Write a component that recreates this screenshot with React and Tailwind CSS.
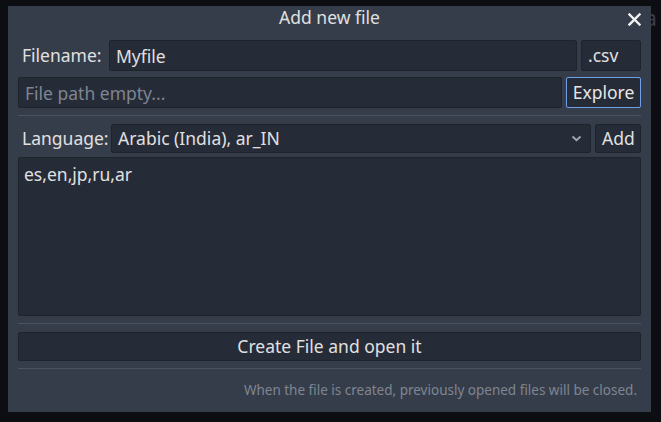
import { useState } from 'react'

const field =
  'h-full rounded-[2px] border border-[#1f232b] bg-[#262b38] px-[6px] text-[#e0e0e0] outline-none'

function Separator({ className = '' }) {
  return <div className={`h-px bg-[#4b5261] ${className}`} />
}

function App() {
  const [name, setName] = useState('Myfile')

  return (
    <div
      className="relative h-[422px] w-[661px] overflow-hidden bg-[#0c0e12] pt-[6px] pl-[8px] text-[17.5px] text-[#e0e0e0]"
      style={{ fontFamily: '"Noto Sans", sans-serif' }}
    >
      <span className="absolute top-[8px] left-[645px] text-[21px] leading-none text-[#3a3f49]">a</span>

      <div className="relative z-10 flex h-[406px] w-[643px] flex-col bg-[#363d4a] px-[10px]">
        {/* title bar */}
        <div className="relative flex h-[34px] items-center justify-center leading-none">
          <span className="-mt-[11px]">Add new file</span>
          <button type="button" className="absolute top-[6px] right-[0px] flex h-[14px] w-[14px] items-center justify-center">
            <svg width="13" height="13" viewBox="0 0 13 13">
              <path d="M1.5 1.5 L11.5 11.5 M11.5 1.5 L1.5 11.5" stroke="#f2f2f2" strokeWidth="2.4" strokeLinecap="square" />
            </svg>
          </button>
        </div>

        {/* filename */}
        <div className="flex h-[31px] items-center gap-[4px]">
          <span className="w-[87px] pl-[4px]">Filename:</span>
          <input
            value={name}
            onChange={(event) => setName(event.target.value)}
            className={`${field} min-w-0 flex-1`}
          />
          <div className={`${field} flex w-[60px] items-center text-[#c8cbd0]`}>.csv</div>
        </div>

        {/* path */}
        <div className="mt-[6px] flex h-[31px] items-center gap-[4px]">
          <input
            placeholder="File path empty..."
            className={`${field} min-w-0 flex-1 placeholder:text-[#7e8591]`}
          />
          <button
            type="button"
            className="h-full w-[75px] rounded-[2px] border border-[#6f9fe6] bg-[#262b38] text-center text-[#e6e6e6]"
          >
            Explore
          </button>
        </div>

        <Separator className="mt-[7px]" />

        {/* language */}
        <div className="mt-[8px] flex h-[29px] items-center gap-[4px]">
          <span className="w-[89px] pl-[4px]">Language:</span>
          <div className={`${field} flex flex-1 items-center justify-between`}>
            <span>Arabic (India), ar_IN</span>
            <svg width="11" height="7" viewBox="0 0 11 7" className="mr-[2px]">
              <path d="M1.5 1.5 L5.5 5.2 L9.5 1.5" fill="none" stroke="#a3a8b1" strokeWidth="1.8" />
            </svg>
          </div>
          <button type="button" className={`${field} w-[46px] px-[0px] text-center text-[#d4d6da]`}>
            Add
          </button>
        </div>

        <div className="mt-[4px] h-[159px] rounded-[2px] border border-[#1f232b] bg-[#262b38] px-[5px] pt-[3px]">
          es,en,jp,ru,ar
        </div>

        <Separator className="mt-[7px]" />

        <button
          type="button"
          className="mt-[8px] h-[29px] rounded-[2px] border border-[#1f232b] bg-[#262b38] text-center text-[#e0e0e0]"
        >
          Create File and open it
        </button>

        <Separator className="mt-[7px]" />

        <p className="mt-[11px] pr-[4px] text-right text-[13.5px] text-[#7f8591]">
          When the file is created, previously opened files will be closed.
        </p>
      </div>
    </div>
  )
}

export default App
